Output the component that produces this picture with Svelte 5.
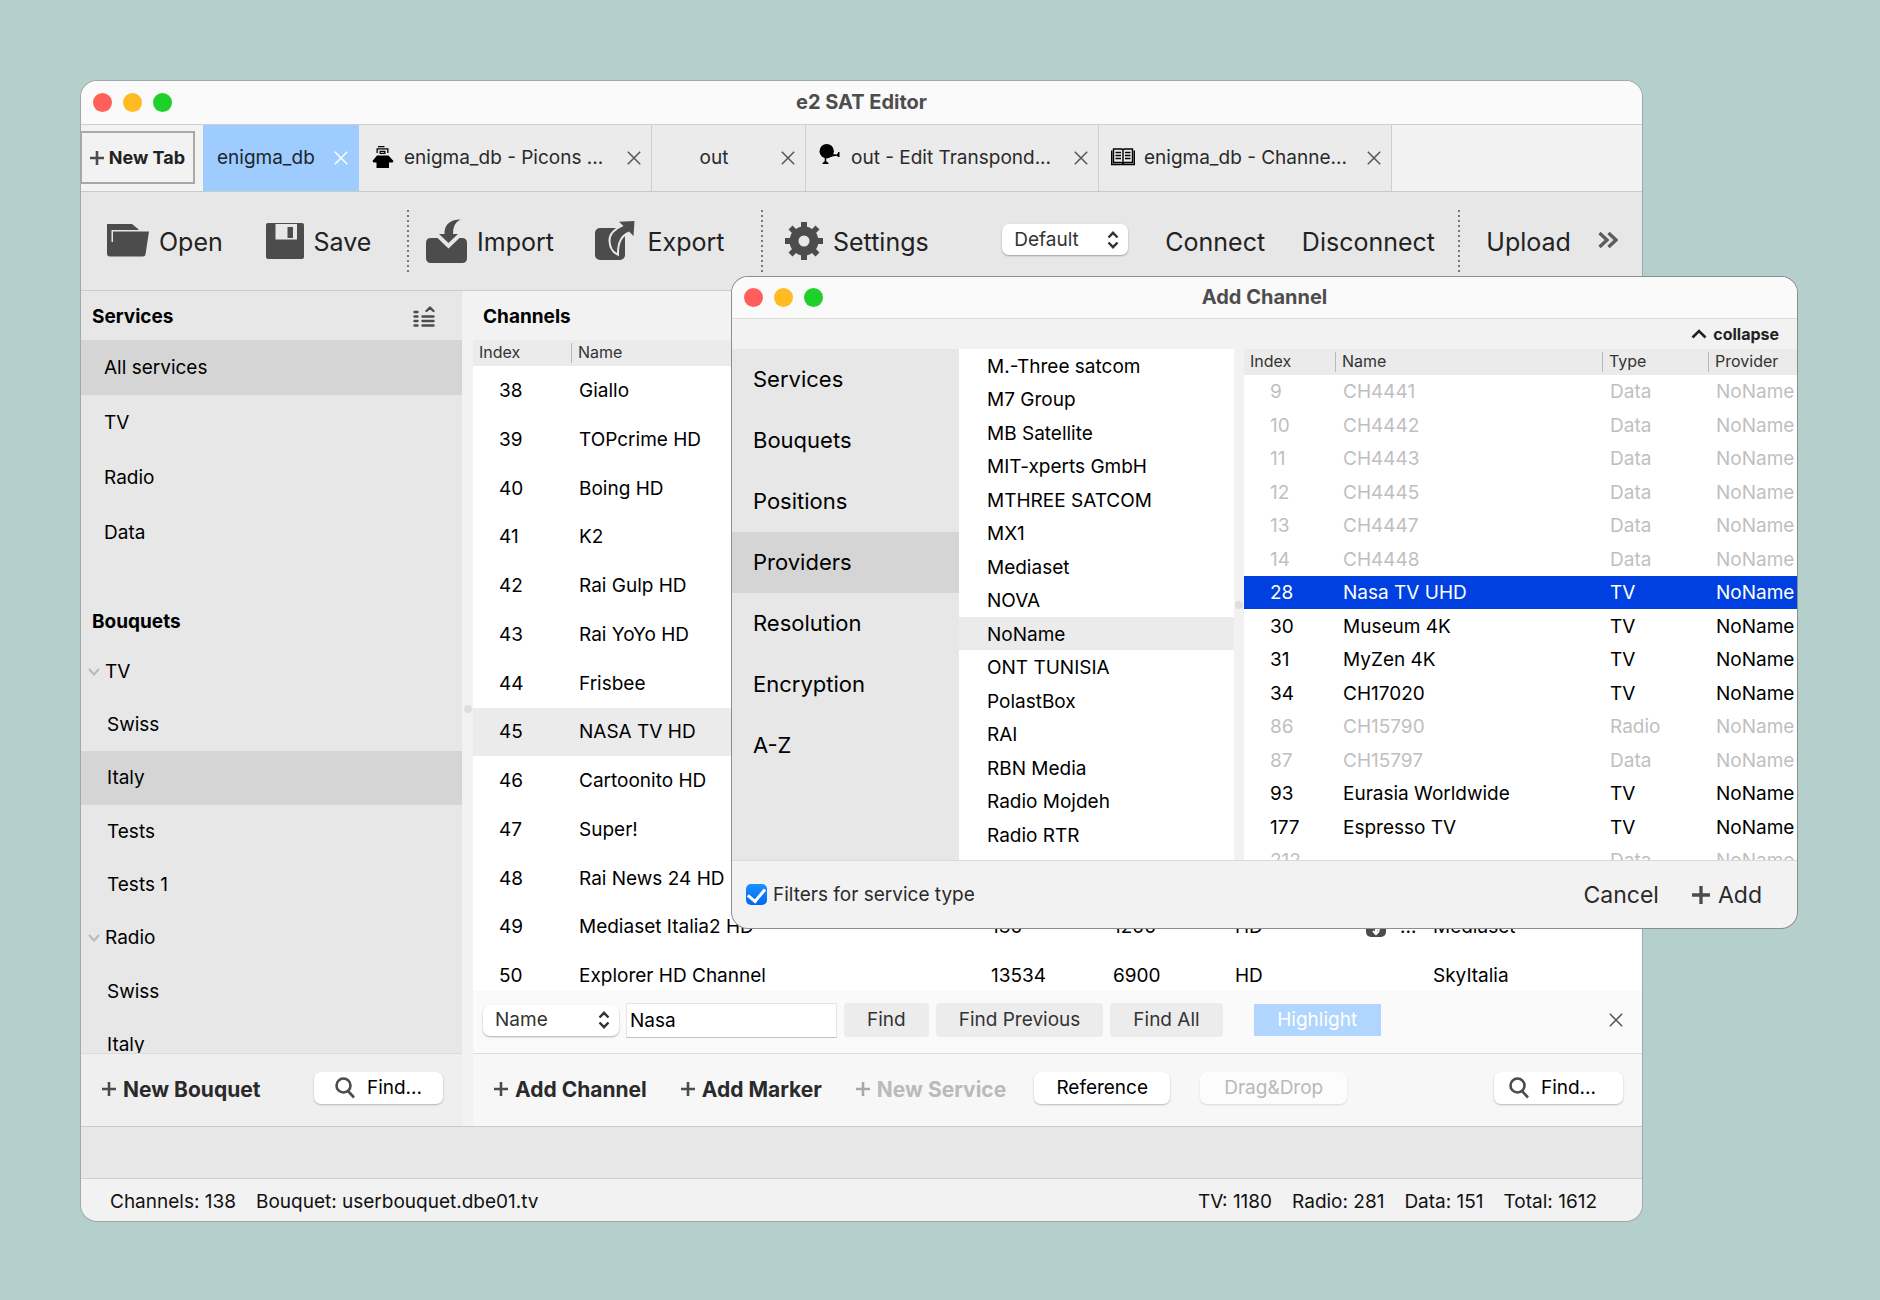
<script>
  const services = ['All services', 'TV', 'Radio', 'Data'];
  const tree = [
    { name: 'TV', group: true },
    { name: 'Swiss' },
    { name: 'Italy', selected: true },
    { name: 'Tests' },
    { name: 'Tests 1' },
    { name: 'Radio', group: true },
    { name: 'Swiss' },
    { name: 'Italy' }
  ];
  const tabs = [
    { label: 'enigma_db', active: true, kind: 'first' },
    { label: 'enigma_db - Picons ...', icon: 'picons', kind: 'wide' },
    { label: 'out', kind: 'short' },
    { label: 'out - Edit Transpond...', icon: 'dish', kind: 'wide' },
    { label: 'enigma_db - Channe...', icon: 'book', kind: 'wide' }
  ];
  const channels = [
    [38, 'Giallo'], [39, 'TOPcrime HD'], [40, 'Boing HD'], [41, 'K2'],
    [42, 'Rai Gulp HD'], [43, 'Rai YoYo HD'], [44, 'Frisbee'], [45, 'NASA TV HD'],
    [46, 'Cartoonito HD'], [47, 'Super!'], [48, 'Rai News 24 HD'],
    [49, 'Mediaset Italia2 HD', '130', '1200', 'HD', true, 'Mediaset'],
    [50, 'Explorer HD Channel', '13534', '6900', 'HD', false, 'SkyItalia']
  ];
  const categories = ['Services', 'Bouquets', 'Positions', 'Providers', 'Resolution', 'Encryption', 'A-Z'];
  const providers = [
    'M.-Three satcom', 'M7 Group', 'MB Satellite', 'MIT-xperts GmbH', 'MTHREE SATCOM', 'MX1',
    'Mediaset', 'NOVA', 'NoName', 'ONT TUNISIA', 'PolastBox', 'RAI', 'RBN Media',
    'Radio Mojdeh', 'Radio RTR'
  ];
  const found = [
    [9, 'CH4441', 'Data'], [10, 'CH4442', 'Data'], [11, 'CH4443', 'Data'], [12, 'CH4445', 'Data'],
    [13, 'CH4447', 'Data'], [14, 'CH4448', 'Data'], [28, 'Nasa TV UHD', 'TV'], [30, 'Museum 4K', 'TV'],
    [31, 'MyZen 4K', 'TV'], [34, 'CH17020', 'TV'], [86, 'CH15790', 'Radio'], [87, 'CH15797', 'Data'],
    [93, 'Eurasia Worldwide', 'TV'], [177, 'Espresso TV', 'TV'], [212, '', 'Data']
  ];
  let term = $state('Nasa');
  let filterByType = $state(true);
</script>

{#snippet cross()}
  <svg class="cross" viewBox="0 0 14 14" aria-hidden="true"><path d="M.8.8l12.4 12.4M13.2.8L.8 13.2" /></svg>
{/snippet}

{#snippet plus()}
  <svg class="plus" viewBox="0 0 14 14" aria-hidden="true"><path d="M7 0v14M0 7h14" /></svg>
{/snippet}

{#snippet lights()}
  <span class="lights" aria-hidden="true"><i class="red"></i><i class="amber"></i><i class="green"></i></span>
{/snippet}

{#snippet arrows()}
  <svg class="arrows" viewBox="0 0 12 18" aria-hidden="true"><path d="M1.5 6.5L6 1.8l4.5 4.7M1.5 11.5L6 16.2l4.5-4.7" /></svg>
{/snippet}

{#snippet lens()}
  <svg class="lens" viewBox="0 0 20 22" aria-hidden="true"><circle cx="8.500" cy="8.500" r="7" /><path d="M13 14l6 6.500" /></svg>
{/snippet}

<div class="desktop">
  <main class="window">
    <header class="titlebar">{@render lights()}<h1>e2 SAT Editor</h1></header>

    <nav class="tabs">
      <button class="new-tab">{@render plus()}New Tab</button>
      {#each tabs as tab}
        <div class="tab {tab.kind}" class:active={tab.active}>
          {#if tab.icon === 'picons'}
            <svg class="tab-icon picons" viewBox="0 0 21 22" aria-hidden="true">
              <path d="M5.500 0h6.500v1.300H5.500zM4 2.200h12V7h-1.300V3.500H5.300V7H4zM7 4.700h6V8H7zM8.200 5.900h3.500v.9H8.200zM4.500 9.500h11.500l5 5.500-1 1.500h-3.500V22h-12.500v-5.500H1L0 15z" fill-rule="evenodd" />
            </svg>
          {:else if tab.icon === 'dish'}
            <svg class="tab-icon dish" viewBox="0 0 21 20" aria-hidden="true">
              <ellipse cx="7.200" cy="7.200" rx="7.200" ry="7.200" />
              <path d="M12 10l5 .5 1.500-1.500V8H20v5h-1.500l-1-1.200-6.500 1zM5.200 13.500h1.500v3.700L9 19v1H3v-1l2.200-1.800z" />
            </svg>
          {:else if tab.icon === 'book'}
            <svg class="tab-icon book" viewBox="0 0 24 18" aria-hidden="true">
              <path d="M2.500 1h8q1.500 0 1.500 1.500Q12 1 13.500 1h8v13.500h-8q-1.500 0-1.500 1.500 0-1.500-1.500-1.500h-8zM12 2v13M.7 2.500v14h22.600v-14M4.500 4.500h5.500M4.500 7.500h5.500M4.500 10.500h5.500M14 4.500h5.500M14 7.500h5.500M14 10.500h5.500" />
            </svg>
          {/if}
          <span>{tab.label}</span>
          <button class="icon-button" aria-label="Close {tab.label}">{@render cross()}</button>
        </div>
      {/each}
    </nav>

    <div class="toolbar">
      <button class="tool open">
        <svg width="42" height="34" viewBox="0 0 42 34" aria-hidden="true">
          <path d="M0 0h25l6.500 5.200v.8H4.500v12H6V7.500h36L38.500 30.500q-.4 2-2.500 2H3q-3 0-3-3z" />
        </svg>
        Open
      </button>
      <button class="tool save">
        <svg width="38" height="36" viewBox="0 0 38 36" aria-hidden="true">
          <path fill-rule="evenodd" d="M2 0h34q2 0 2 2v32q0 2-2 2H2q-2 0-2-2V2Q0 0 2 0zM9.500 1v15.500H31V1zM21.500 4H27v11h-5.500z" />
        </svg>
        Save
      </button>
      <span class="divider"></span>
      <button class="tool import">
        <svg width="41" height="44" viewBox="0 0 41 44" aria-hidden="true">
          <path d="M34.500.5q-8 4-7.500 14.500h5L22.500 24 13 15h5.500Q18 1 34.500.5z" />
          <path d="M5 19h6.500l11 10.500L33.500 19H36q5 0 5 5v15q0 5-5 5H5q-5 0-5-5V24q0-5 5-5z" />
        </svg>
        Import
      </button>
      <button class="tool export">
        <svg width="40" height="40" viewBox="0 0 40 40" aria-hidden="true">
          <rect y="7" width="30" height="32" rx="5" />
          <path class="arrow" d="M39.500 0L24 .7 28.500 5Q15 11 15.500 20q.5 9 6.500 12Q22 15 34 10.500l4.500 4.500z" />
        </svg>
        Export
      </button>
      <span class="divider"></span>
      <button class="tool settings">
        <svg width="38" height="38" viewBox="0 0 38 38" aria-hidden="true">
          <circle class="ring" cx="19" cy="19" r="10" />
          <path d="M16 0h6v7h-6zM16 31h6v7h-6zM0 16h7v6H0zM31 16h7v6h-7zM3.500 7.500l4-4 5 5-4 4zM30.500 3.500l4 4-5 5-4-4zM34.500 30.500l-4 4-5-5 4-4zM7.500 34.500l-4-4 5-5 4 4z" />
        </svg>
        Settings
      </button>
      <span class="select profile">
        <select aria-label="Profile"><option>Default</option></select>{@render arrows()}
      </span>
      <button class="tool connect">Connect</button>
      <button class="tool disconnect">Disconnect</button>
      <span class="divider"></span>
      <button class="tool upload">Upload</button>
      <button class="icon-button" aria-label="More tools">
        <svg class="more" viewBox="0 0 20 16" aria-hidden="true"><path d="M1.500 1l7.500 7-7.500 7M10.500 1l7.500 7-7.500 7" /></svg>
      </button>
    </div>

    <div class="body">
      <aside class="sidebar">
        <div class="heading">
          <h2>Services</h2>
          <button class="icon-button" aria-label="Collapse list">
            <svg class="rows-icon" viewBox="0 0 22 21" aria-hidden="true">
              <path d="M1.500 6h3M1.500 10.500h3M1.500 15h3M1.500 19.500h3M9.500 10.500h11M9.500 15h11M9.500 19.500h11M13.500 5L17 1.700 20.500 5" />
            </svg>
          </button>
        </div>
        <ul class="services">
          {#each services as item, i}<li class:selected={i === 0}>{item}</li>{/each}
        </ul>
        <div class="heading bouquets"><h2>Bouquets</h2></div>
        <ul class="tree">
          {#each tree as node}
            <li class:group={node.group} class:selected={node.selected}>
              {#if node.group}<svg class="chevron" viewBox="0 0 12 8" aria-hidden="true"><path d="M1 1l5 5.500L11 1" /></svg>{/if}
              {node.name}
            </li>
          {/each}
        </ul>
        <footer class="actions">
          <button class="text-button">{@render plus()}New Bouquet</button>
          <button class="push find">{@render lens()}Find...</button>
        </footer>
      </aside>

      <div class="splitter"></div>

      <section class="content">
        <div class="heading"><h2>Channels</h2></div>
        <div class="table-wrap">
          <table class="channels">
            <colgroup><col class="c-index" /><col class="c-name" /><col class="c-num" /><col class="c-num" /><col class="c-def" /><col class="c-mark" /><col /></colgroup>
            <thead><tr><th>Index</th><th>Name</th><th colspan="5"></th></tr></thead>
            <tbody>
              {#each channels as [index, name, a, b, def, coded, provider]}
                <tr class:selected={index === 45}>
                  <td>{index}</td><td>{name}</td><td>{a}</td><td>{b}</td><td>{def}</td>
                  <td>
                    {#if coded}
                      <span class="coded">
                        <svg viewBox="0 0 20 20" aria-hidden="true">
                          <rect width="20" height="20" rx="5" />
                          <path d="M13.500 6.500q-3.500-2.500-6 0t1 4 5 3M10 10v7M7 14l3 3 3-3" />
                        </svg>
                        ...
                      </span>
                    {/if}
                  </td>
                  <td>{provider}</td>
                </tr>
              {/each}
            </tbody>
          </table>
        </div>
        <form class="find-bar">
          <span class="select field">
            <select aria-label="Search in"><option>Name</option></select>{@render arrows()}
          </span>
          <input class="term" type="text" aria-label="Search text" bind:value={term} />
          <button type="button" class="flat">Find</button>
          <button type="button" class="flat">Find Previous</button>
          <button type="button" class="flat">Find All</button>
          <button type="button" class="highlight">Highlight</button>
          <button type="button" class="icon-button" aria-label="Close search">{@render cross()}</button>
        </form>
        <footer class="actions">
          <button class="text-button">{@render plus()}Add Channel</button>
          <button class="text-button">{@render plus()}Add Marker</button>
          <button class="text-button" disabled>{@render plus()}New Service</button>
          <button class="push">Reference</button>
          <button class="push drag" disabled>Drag&amp;Drop</button>
          <button class="push find">{@render lens()}Find...</button>
        </footer>
      </section>
    </div>

    <div class="band"></div>
    <footer class="status">
      <div class="stats"><span>Channels: 138</span><span>Bouquet: userbouquet.dbe01.tv</span></div>
      <div class="stats"><span>TV: 1180</span><span>Radio: 281</span><span>Data: 151</span><span>Total: 1612</span></div>
    </footer>
  </main>

  <section class="window dialog" role="dialog" aria-labelledby="dialog-title">
    <header class="titlebar">{@render lights()}<h1 id="dialog-title">Add Channel</h1></header>
    <div class="collapse-row">
      <button class="collapse">
        <svg viewBox="0 0 16 10" aria-hidden="true"><path d="M1.500 8.500L8 2l6.500 6.500" /></svg>collapse
      </button>
    </div>
    <div class="dialog-body">
      <ul class="categories">
        {#each categories as item}<li class:selected={item === 'Providers'}>{item}</li>{/each}
      </ul>
      <ul class="providers">
        {#each providers as item}<li class:selected={item === 'NoName'}>{item}</li>{/each}
      </ul>
      <div class="splitter"></div>
      <div class="table-wrap">
        <table class="found">
          <colgroup><col class="f-index" /><col /><col class="f-type" /><col class="f-provider" /></colgroup>
          <thead><tr><th>Index</th><th>Name</th><th>Type</th><th>Provider</th></tr></thead>
          <tbody>
            {#each found as [index, name, type]}
              <tr class:muted={type !== 'TV'} class:chosen={index === 28}>
                <td>{index}</td><td>{name}</td><td>{type}</td><td>NoName</td>
              </tr>
            {/each}
          </tbody>
        </table>
      </div>
    </div>
    <footer class="dialog-actions">
      <label><input type="checkbox" bind:checked={filterByType} />Filters for service type</label>
      <button class="cancel">Cancel</button>
      <button class="add">{@render plus()}Add</button>
    </footer>
  </section>
</div>

<style>
  :global(body) {
    background: #b5d0cc;
  }

  .desktop {
    position: relative;
    box-sizing: border-box;
    height: 100vh;
    padding: 81px 238px 79px 81px;
    font: 19px/24px Inter, 'Liberation Sans', sans-serif;
    color: #000;
  }

  .desktop :global(*) {
    box-sizing: border-box;
  }

  h1, h2, ul {
    margin: 0;
    padding: 0;
    list-style: none;
  }

  h1 {
    font-size: 20px;
    line-height: 24px;
    font-weight: 700;
    color: #4d4d4d;
  }

  h2 {
    font-size: 19px;
    line-height: 24px;
    font-weight: 700;
  }

  button, select, input {
    margin: 0;
    padding: 0;
    border: 0;
    background: none;
    font: inherit;
    color: inherit;
    white-space: nowrap;
  }

  svg {
    flex: none;
    fill: none;
    stroke: #4c4c4c;
  }

  .window {
    display: flex;
    flex-direction: column;
    height: 100%;
    overflow: hidden;
    border-radius: 16px;
    background: #f2f2f2;
    box-shadow: 0 0 0 1px #9eaaa8;
  }

  .titlebar {
    display: grid;
    grid-template-columns: 1fr auto 1fr;
    align-items: center;
    flex: none;
    height: 44px;
    padding: 0 12px 2px;
    background: #fafafa;
    border-bottom: 1px solid #cfcfcf;
  }

  .lights {
    display: flex;
    gap: 11px;
  }

  .lights i {
    width: 19px;
    height: 19px;
    border-radius: 50%;
    margin-top: 2px;
  }

  .red { background: #ff5f5b; }
  .amber { background: #febc22; }
  .green { background: #1fd02b; }

  /* Tabs */
  .tabs {
    display: flex;
    flex: none;
    height: 67px;
    border-bottom: 1px solid #c9c9c9;
  }

  .new-tab {
    display: flex;
    align-items: center;
    justify-content: center;
    gap: 5px;
    width: 114px;
    height: 53px;
    margin: 6px 8px 0 0;
    border: 2px solid #a8a8a8;
    border-left-width: 1px;
    font-size: 18px;
    font-weight: 700;
    color: #222;
  }

  .tab {
    display: flex;
    align-items: center;
    gap: 9px;
    padding: 0 10px 0 14px;
    border-right: 1px solid #cfcfcf;
    background: #ebebeb;
    color: #2a2a2a;
  }

  .tab span {
    flex: 1;
    white-space: nowrap;
  }

  .tab.first { width: 156px; }
  .tab.short { width: 154px; text-align: center; padding-left: 4px; }
  .tab.wide { width: 293px; padding-left: 12px; }

  .tab.active {
    background: #9fccff;
    border-color: #9fccff;
    color: #1b2530;
  }

  .active .cross { stroke: #fff; }

  .tab-icon {
    width: 24px;
    height: 22px;
    margin-bottom: 2px;
    fill: #000;
    stroke: none;
  }

  .tab-icon.dish { height: 20px; margin-bottom: 8px; }

  .tab-icon.book {
    height: 18px;
    fill: none;
    stroke: #000;
    stroke-width: 1.4;
  }

  .icon-button { display: flex; }
  .cross { width: 14px; height: 14px; stroke: #555; stroke-width: 1.5; }
  .plus { width: 14px; height: 14px; stroke-width: 2.6; }

  /* Toolbar */
  .toolbar {
    display: flex;
    align-items: center;
    flex: none;
    height: 99px;
    padding: 0 24px 0 26px;
    background: #e7e7e7;
    border-bottom: 1px solid #cbcbcb;
    color: #222;
  }

  .tool {
    display: flex;
    align-items: center;
    gap: 10px;
    padding-top: 2px;
    font-size: 25px;
    line-height: 32px;
  }

  .tool svg { fill: #4c4c4c; stroke: none; margin-bottom: 2px; }
  .tool .arrow { stroke: #e7e7e7; stroke-width: 4; paint-order: stroke; }
  .tool .ring { fill: none; stroke: #4c4c4c; stroke-width: 9; }

  .open { width: 159px; }
  .save { width: 142px; }
  .import { margin-left: 17px; width: 169px; }
  .export { width: 167px; gap: 13px; }
  .settings { margin-left: 22px; width: 218px; }
  .connect { margin-left: 37px; width: 137px; }
  .disconnect { width: 157px; }
  .upload { margin-left: 26px; width: 112px; }

  .divider {
    width: 2px;
    height: 62px;
    background: repeating-linear-gradient(#777 0 2px, transparent 2px 5px);
  }

  .more { width: 20px; height: 16px; margin-bottom: 2px; stroke: #5c5c5c; stroke-width: 3.4; }

  .select {
    position: relative;
    display: flex;
    align-items: center;
    flex: none;
    height: 31px;
    border-radius: 7px;
    background: #fff;
    box-shadow: 0 1px 2px #0000004d;
    color: #333;
  }

  .select select {
    appearance: none;
    width: 100%;
    height: 100%;
    padding: 0 30px 0 12px;
  }

  .arrows {
    position: absolute;
    right: 9px;
    width: 12px;
    height: 18px;
    stroke: #333;
    stroke-width: 2.4;
    pointer-events: none;
  }

  .profile { width: 126px; margin-bottom: 3px; }
  .field { width: 136px; }

  /* Body */
  .body {
    display: flex;
    flex: 1;
    min-height: 0;
  }

  .sidebar {
    display: flex;
    flex-direction: column;
    width: 381px;
    background: #e7e7e7;
  }

  .heading {
    display: flex;
    align-items: center;
    justify-content: space-between;
    flex: none;
    height: 49px;
    padding: 2px 27px 0 11px;
  }

  .content .heading { padding-left: 10px; }

  .rows-icon { width: 22px; height: 21px; stroke-width: 2.4; stroke-linecap: round; }

  .services li {
    height: 55px;
    padding: 0 23px;
    line-height: 55px;
  }

  .selected { background: #d5d5d5; }

  .bouquets { height: 85px; padding-top: 39px; }

  .tree {
    flex: 1;
    min-height: 0;
    overflow: hidden;
  }

  .tree li {
    display: flex;
    align-items: center;
    gap: 5px;
    height: 53px;
    padding: 0 26px;
  }

  .tree li:nth-child(3n) { height: 54px; }
  .tree .group { padding-left: 7px; }
  .chevron { width: 12px; height: 8px; stroke: #b9b9b9; stroke-width: 2; }

  .actions {
    display: flex;
    align-items: center;
    flex: none;
    height: 73px;
    padding: 0 19px 0 21px;
    border-top: 1px solid #dcdcdc;
    background: #efefef;
  }

  .text-button {
    display: flex;
    align-items: center;
    gap: 7px;
    margin-right: 34px;
    font-size: 21px;
    font-weight: 700;
    color: #2a2a2a;
  }

  .text-button .plus { margin-bottom: 2px; }
  .text-button:disabled { margin-right: 28px; color: #bababa; }
  .text-button:disabled .plus { stroke: #a8a8a8; }

  .push {
    display: flex;
    align-items: center;
    justify-content: center;
    gap: 12px;
    width: 136px;
    height: 32px;
    margin-bottom: 4px;
    border-radius: 7px;
    background: #fff;
    box-shadow: 0 1px 2px #00000040;
  }

  .find { width: 129px; margin-left: auto; }
  .content .find { padding-right: 12px; }
  .drag { width: 147px; margin-left: 30px; color: #b9b9b9; background: #fcfcfc; box-shadow: 0 1px 2px #0000001f; }
  .lens { width: 20px; height: 22px; stroke-width: 2.6; }

  .splitter {
    display: flex;
    align-items: center;
    justify-content: center;
    flex: none;
    width: 11px;
    background: #f2f2f2;
  }

  .splitter::after {
    content: '';
    width: 8px;
    height: 8px;
    border-radius: 50%;
    background: #dedede;
  }

  .content {
    display: flex;
    flex-direction: column;
    flex: 1;
    min-width: 0;
  }

  .table-wrap {
    flex: 1;
    min-width: 0;
    min-height: 0;
    overflow: hidden;
    background: #fff;
  }

  table {
    width: 100%;
    table-layout: fixed;
    border-collapse: collapse;
  }

  th {
    position: relative;
    height: 26px;
    padding: 0 6px 2px;
    background: #ebebeb;
    text-align: left;
    font-size: 16px;
    line-height: 20px;
    font-weight: 400;
    color: #333;
  }

  th:not(:last-child)::after {
    content: '';
    position: absolute;
    inset: 3px 0 3px auto;
    border-right: 1px solid #b9b9b9;
  }

  .channels th:nth-child(2)::after { border: 0; }

  td {
    padding: 0 0 0 7px;
    white-space: nowrap;
  }

  td:first-child { padding-left: 26px; }

  .channels td { height: 49px; }
  .channels tr:nth-child(4n) td { height: 48px; }
  .channels .selected { background: #ebebeb; }
  .c-index { width: 99px; }
  .c-name { width: 412px; }
  .c-num { width: 122px; }
  .c-def { width: 131px; }
  .c-mark { width: 67px; }

  .coded { display: flex; align-items: center; gap: 14px; }
  .coded svg { width: 20px; height: 20px; fill: #4c4c4c; stroke: none; }
  .coded path { fill: none; stroke: #fff; stroke-width: 2; }

  .find-bar {
    display: flex;
    align-items: center;
    flex: none;
    gap: 7px;
    height: 62px;
    padding: 0 19px 4px 10px;
    background: #fafafa;
    color: #333;
  }

  .term {
    width: 211px;
    height: 35px;
    padding: 0 3px;
    border: 1px solid #e6e6e6;
    border-bottom-color: #c2c2c2;
    background: #fff;
    color: #000;
  }

  .flat {
    height: 34px;
    padding: 0 23px;
    border-radius: 4px;
    background: #ececec;
  }

  .highlight {
    width: 127px;
    height: 32px;
    margin: 0 auto 0 24px;
    background: #b0d5ff;
    color: #fff;
  }

  .content .actions { background: #f7f7f7; }

  .band {
    flex: none;
    height: 53px;
    border-top: 1px solid #c9c9c9;
    border-bottom: 1px solid #d0d0d0;
    background: #e7e7e7;
  }

  .status {
    display: flex;
    align-items: center;
    justify-content: space-between;
    flex: none;
    height: 42px;
    padding: 4px 45px 0 29px;
    color: #111;
  }

  .stats { display: flex; gap: 20px; }

  /* Dialog */
  .dialog {
    position: absolute;
    inset: 277px 83px 372px 732px;
    height: auto;
    box-shadow: 0 0 0 1px #8d8d8d;
  }

  .dialog .titlebar { height: 42px; border-color: #dedede; }

  .collapse-row {
    display: flex;
    justify-content: flex-end;
    flex: none;
    height: 30px;
    padding: 0 18px;
  }

  .collapse {
    display: flex;
    align-items: center;
    gap: 6px;
    font-size: 16px;
    line-height: 20px;
    font-weight: 700;
    color: #222;
  }

  .collapse svg { width: 16px; height: 10px; stroke: #222; stroke-width: 2.6; }

  .dialog-body {
    display: flex;
    flex: 1;
    min-height: 0;
  }

  .categories {
    flex: none;
    width: 227px;
    background: #e7e7e7;
    font-size: 22px;
  }

  .categories li {
    height: 61px;
    padding: 0 21px;
    line-height: 61px;
  }

  .providers {
    flex: none;
    width: 275px;
    overflow: hidden;
    background: #fff;
  }

  .providers li {
    height: 33px;
    padding: 0 28px;
    line-height: 35px;
  }

  .providers li:nth-child(even) { height: 34px; }
  .providers .selected { background: #ebebeb; }
  .dialog .splitter { width: 10px; }

  .found td { height: 33px; padding-top: 1px; line-height: 24px; }
  .found tr:nth-child(even) td { height: 34px; }
  .found .muted { color: #bfbfbf; }
  .found .chosen { background: #0040e0; color: #fff; }
  .f-index { width: 92px; }
  .f-type { width: 106px; }
  .f-provider { width: 88px; }

  .dialog-actions {
    display: flex;
    align-items: center;
    flex: none;
    height: 68px;
    padding: 0 35px 0 14px;
    border-top: 1px solid #dadada;
    color: #2a2a2a;
  }

  .dialog-actions label {
    display: flex;
    align-items: center;
    gap: 6px;
    margin-right: auto;
  }

  input[type='checkbox'] {
    display: grid;
    place-items: center;
    appearance: none;
    width: 21px;
    height: 21px;
    border-radius: 5px;
    background: #fff;
    box-shadow: 0 0 2px #00000066;
  }

  input[type='checkbox']:checked {
    background: linear-gradient(#1a8fff, #0068f5);
    box-shadow: none;
  }

  input[type='checkbox']:checked::before {
    content: '';
    width: 8px;
    height: 14px;
    margin-bottom: 3px;
    border: solid #fff;
    border-width: 0 3px 3px 0;
    rotate: 40deg;
  }

  .cancel { margin-right: 33px; font-size: 23px; }

  .add {
    display: flex;
    align-items: center;
    gap: 8px;
    font-size: 23px;
  }

  .add .plus { width: 18px; height: 18px; }
</style>
